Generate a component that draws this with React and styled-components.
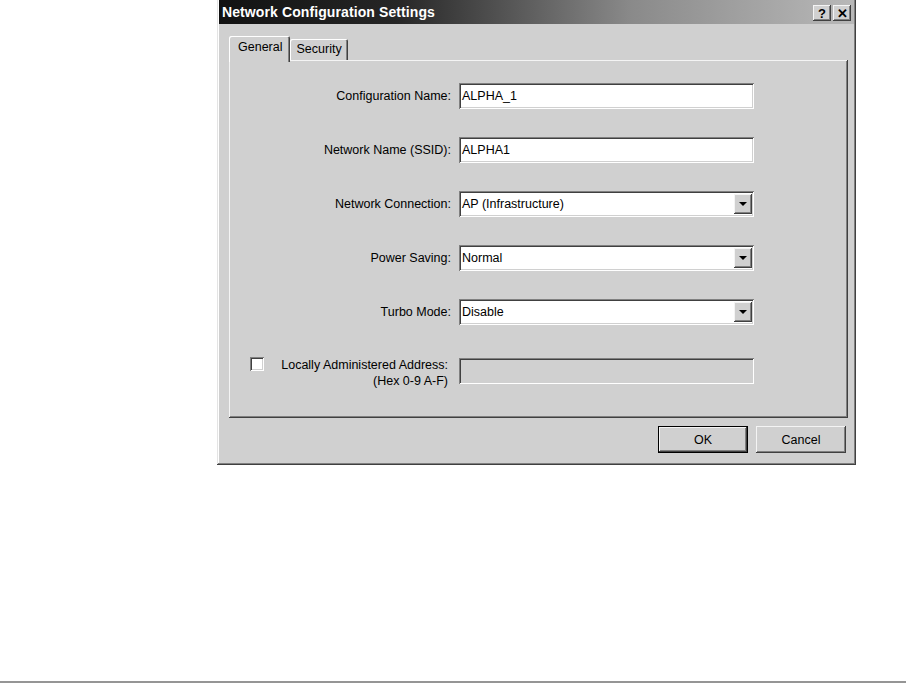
import React from 'react';
import styled, { createGlobalStyle, css } from 'styled-components';

const GlobalStyle = createGlobalStyle`
  html, body {
    margin: 0;
    padding: 0;
    background: #ffffff;
  }
  body {
    font-family: "Liberation Sans", Arial, sans-serif;
    font-size: 12.5px;
    color: #000;
  }
`;

const face = '#d0d0d0';

const raised = css`
  box-shadow:
    inset -1px -1px #404040,
    inset 1px 1px #f4f4f4,
    inset -2px -2px #808080,
    inset 2px 2px ${face};
`;

const sunken = css`
  box-shadow:
    inset 1px 1px #808080,
    inset -1px -1px #ffffff,
    inset 2px 2px #404040,
    inset -2px -2px ${face};
`;

const Page = styled.div`
  height: 683px;
  display: flex;
  flex-direction: column;
`;

const DialogRow = styled.div`
  padding-left: 217px;
`;

const Dialog = styled.div`
  width: 639px;
  height: 465px;
  box-sizing: border-box;
  background: ${face};
  padding: 0 2px 2px 2px;
  box-shadow:
    inset -1px -1px #404040,
    inset 1px 0 #e4e4e4,
    inset -2px -2px #808080,
    inset 2px 0 #ffffff;
  display: flex;
  flex-direction: column;
`;

const TitleBar = styled.div`
  height: 24px;
  display: flex;
  align-items: center;
  justify-content: space-between;
  padding: 0 3px 0 3px;
  background: linear-gradient(to right, #121212 0%, #262626 28%, #8a8a8a 65%, #b8b8b8 100%);
`;

const Title = styled.span`
  color: #fff;
  font-weight: bold;
  font-size: 14px;
  letter-spacing: 0.1px;
`;

const TitleButtons = styled.div`
  display: flex;
  gap: 2px;
  margin-top: 2px;
`;

const TitleButton = styled.div`
  width: 18px;
  height: 16px;
  background: ${face};
  ${raised};
  display: flex;
  align-items: center;
  justify-content: center;
  font-weight: bold;
  font-size: 13px;
  line-height: 1;
`;

const Body = styled.div`
  padding: 12px 6px 10px 10px;
  display: flex;
  flex-direction: column;
`;

const TabStrip = styled.div`
  height: 24px;
  display: flex;
  align-items: flex-end;
  position: relative;
  z-index: 1;
`;

const Tab = styled.div`
  box-sizing: border-box;
  height: ${p => (p.$active ? '26px' : '21px')};
  margin-bottom: ${p => (p.$active ? '-2px' : '0')};
  padding: ${p => (p.$active ? '4px 8px 0 9px' : '3px 6px 0 6px')};
  background: ${face};
  border-top-left-radius: 2px;
  border-top-right-radius: 2px;
  box-shadow:
    inset 1px 1px #ffffff,
    inset -1px 0 #404040,
    inset -2px 0 #808080;
  white-space: nowrap;
`;

const Panel = styled.div`
  height: 358px;
  box-sizing: border-box;
  ${raised};
  padding: 23px 2px 0 2px;
`;

const Form = styled.div`
  display: grid;
  grid-template-columns: 223px 295px;
  column-gap: 5px;
  row-gap: 28px;
  align-items: center;
`;

const Label = styled.div`
  text-align: right;
  padding-right: 3px;
  white-space: nowrap;
`;

const Field = styled.div`
  box-sizing: border-box;
  height: 26px;
  background: ${p => (p.$disabled ? face : '#ffffff')};
  ${sunken};
  display: flex;
  align-items: center;
  padding: 0 2px 0 3px;
`;

const FieldText = styled.span`
  flex: 1;
  white-space: nowrap;
`;

const DropButton = styled.div`
  width: 18px;
  height: 20px;
  background: ${face};
  ${raised};
  display: flex;
  align-items: center;
  justify-content: center;
`;

const CheckCell = styled.div`
  align-self: start;
  display: flex;
  align-items: flex-start;
  padding-left: 19px;
  padding-top: 4px;
`;

const CheckBox = styled.div`
  width: 14px;
  height: 14px;
  background: #fff;
  ${sunken};
  flex-shrink: 0;
`;

const CheckLabel = styled.div`
  flex: 1;
  text-align: right;
  padding-right: 6px;
  line-height: 16px;
  margin-top: 0;
  white-space: nowrap;
`;

const ButtonRow = styled.div`
  margin-top: 8px;
  display: flex;
  justify-content: flex-end;
  gap: 8px;
  padding-right: 2px;
`;

const Button = styled.div`
  width: 90px;
  height: 27px;
  box-sizing: border-box;
  background: ${face};
  display: flex;
  align-items: center;
  justify-content: center;
  ${p =>
    p.$default
      ? css`
          box-shadow:
            inset 0 0 0 1px #000,
            inset -2px -2px #404040,
            inset 2px 2px #f4f4f4,
            inset -3px -3px #808080;
        `
      : raised};
`;

const Rule = styled.div`
  margin-top: auto;
  height: 2px;
  background: #959595;
`;

const Arrow = () => (
  <svg width="8" height="4" viewBox="0 0 8 4">
    <path d="M0 0 H8 L4 4 Z" fill="#000" />
  </svg>
);

const rows = [
  { label: 'Configuration Name:', value: 'ALPHA_1' },
  { label: 'Network Name (SSID):', value: 'ALPHA1' },
  { label: 'Network Connection:', value: 'AP (Infrastructure)', select: true },
  { label: 'Power Saving:', value: 'Normal', select: true },
  { label: 'Turbo Mode:', value: 'Disable', select: true },
];

export default function App() {
  return (
    <>
      <GlobalStyle />
      <Page>
        <DialogRow>
          <Dialog>
            <TitleBar>
              <Title>Network Configuration Settings</Title>
              <TitleButtons>
                <TitleButton>?</TitleButton>
                <TitleButton>✕</TitleButton>
              </TitleButtons>
            </TitleBar>
            <Body>
              <TabStrip>
                <Tab $active>General</Tab>
                <Tab>Security</Tab>
              </TabStrip>
              <Panel>
                <Form>
                  {rows.map(r => (
                    <React.Fragment key={r.label}>
                      <Label>{r.label}</Label>
                      <Field>
                        <FieldText>{r.value}</FieldText>
                        {r.select && (
                          <DropButton>
                            <Arrow />
                          </DropButton>
                        )}
                      </Field>
                    </React.Fragment>
                  ))}
                  <CheckCell>
                    <CheckBox />
                    <CheckLabel>
                      Locally Administered Address:
                      <br />
                      (Hex 0-9 A-F)
                    </CheckLabel>
                  </CheckCell>
                  <Field $disabled />
                </Form>
              </Panel>
              <ButtonRow>
                <Button $default>OK</Button>
                <Button>Cancel</Button>
              </ButtonRow>
            </Body>
          </Dialog>
        </DialogRow>
        <Rule />
      </Page>
    </>
  );
}
